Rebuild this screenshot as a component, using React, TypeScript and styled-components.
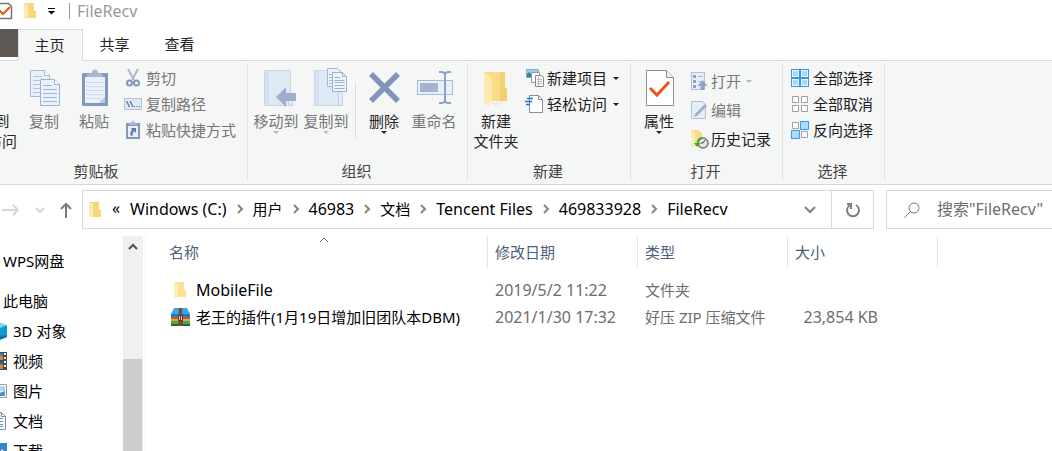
import React from "react";
import styled, { createGlobalStyle, css } from "styled-components";

const GlobalStyle = createGlobalStyle`
  * { box-sizing: border-box; }
  body {
    margin: 0;
    background: #fff;
    color: #000;
    font: 15px/20px "Noto Sans", "Noto Sans CJK SC", sans-serif;
  }
  button, input {
    margin: 0;
    padding: 0;
    border: 0;
    background: none;
    color: inherit;
    font: inherit;
  }
  svg { display: block; flex: none; overflow: visible; }
`;

const Window = styled.div`
  display: flex;
  flex-direction: column;
  height: 100vh;
  overflow: hidden;
`;

const TitleBar = styled.header`
  display: flex;
  align-items: flex-start;
  height: 29px;
  flex: none;
`;

const QuickAccess = styled.div`
  display: flex;
  align-items: center;
  height: 22px;
  gap: 10px;
  margin-left: -4px;
  padding-right: 13px;
`;

const QuickButton = styled.button`
  display: flex;
`;

const Title = styled.h1`
  margin: 3px 0 0;
  height: 16px;
  padding-left: 7px;
  border-left: 1px solid #999;
  color: #999;
  font-size: 16px;
  font-weight: 400;
  line-height: 16px;
`;

const TabStrip = styled.nav`
  display: flex;
  height: 31px;
  flex: none;
`;

const FileTab = styled.button`
  width: 18px;
  height: 28px;
  background: #5d5853;
`;

const Tab = styled.button<{ $active?: boolean }>`
  width: 65px;
  height: 32px;
  padding: 0 2px 2px 0;
  color: #262626;
  ${(p) =>
    p.$active &&
    css`
      position: relative;
      background: #f5f6f6;
      border: 1px solid #dadbdb;
      border-bottom: 0;
    `}
`;

const Ribbon = styled.section`
  display: flex;
  flex: none;
  height: 125px;
  padding: 2px 0 3px;
  border-top: 1px solid #dadbdb;
  border-bottom: 1px solid #d6d8d8;
  background: #f5f6f6;
  overflow: hidden;
`;

const Group = styled.div<{ $width: number; $lead?: number }>`
  display: flex;
  flex-direction: column;
  justify-content: space-between;
  flex: none;
  width: ${(p) => p.$width}px;
  margin-left: ${(p) => p.$lead ?? 0}px;
  padding: 5px 3px 0;
  border-right: 1px solid #e2e3e3;
`;

const GroupBody = styled.div`
  display: flex;
`;

const GroupLabel = styled.div`
  padding-right: 2px;
  color: #444;
  text-align: center;
`;

const LargeButton = styled.button<{ $pinned?: boolean }>`
  display: flex;
  flex-direction: column;
  align-items: center;
  flex: none;
  width: ${(p) => (p.$pinned ? 64 : 50)}px;
  margin-left: ${(p) => (p.$pinned ? 5 : 0)}px;
  color: #262626;
  white-space: nowrap;
  &:disabled { color: #777; }
`;

const LargeLabel = styled.span`
  margin-top: 3px;
`;

const Caret = styled.span`
  width: 0;
  height: 0;
  border: 3px solid transparent;
  border-top-color: currentColor;
  border-bottom: 0;
  button:disabled & { color: #b8b8b8; }
`;

const SmallList = styled.div<{ $row: number; $inset: number; $top?: number }>`
  display: grid;
  grid-auto-rows: ${(p) => p.$row}px;
  align-content: start;
  margin-left: ${(p) => p.$inset}px;
  padding-top: ${(p) => p.$top ?? 0}px;
  height: 78px;
`;

const SmallButton = styled.button<{ $gap?: number }>`
  display: flex;
  align-items: center;
  height: 20px;
  gap: ${(p) => p.$gap ?? 4}px;
  color: #1c1c1c;
  white-space: nowrap;
  &:disabled { color: #777; }
  ${Caret} { margin-left: 3px; }
`;

const Divider = styled.div`
  width: 1px;
  height: 56px;
  margin: 14px 3px 0 4px;
  background: #dcdddd;
`;

const NavRow = styled.div`
  display: flex;
  flex: none;
  padding-top: 5px;
  height: 51px;
`;

const NavButtons = styled.div`
  display: flex;
  align-items: center;
  width: 82px;
  height: 39px;
`;

const NavButton = styled.button<{ $width: number }>`
  display: flex;
  justify-content: center;
  width: ${(p) => p.$width}px;
`;

const AddressBar = styled.div`
  display: flex;
  flex: 1;
  height: 39px;
  border: 1px solid #d9d9d9;
`;

const Crumbs = styled.nav`
  display: flex;
  align-items: center;
  flex: 1;
  padding-left: 5px;
`;

const Crumb = styled.a`
  padding-bottom: 2px;
  color: #000;
  text-decoration: none;
  white-space: nowrap;
`;

const Latin = styled.span`
  font-size: 16px;
`;

const Overflow = styled.button`
  width: 28px;
  height: 24px;
  padding-bottom: 4px;
  font-size: 16px;
  line-height: 20px;
`;

const CrumbArrow = styled.span`
  display: flex;
  justify-content: center;
  width: 26px;
`;

const AddressButton = styled.button<{ $divided?: boolean }>`
  display: flex;
  align-items: center;
  justify-content: center;
  width: 42px;
  border-left: ${(p) => (p.$divided ? "1px solid #d9d9d9" : "0")};
`;

const SearchBox = styled.label`
  display: flex;
  align-items: center;
  width: 166px;
  height: 39px;
  margin-left: 12px;
  padding-left: 17px;
  gap: 17px;
  border: 1px solid #d9d9d9;
  border-right: 0;
`;

const SearchInput = styled.input`
  flex: 1;
  min-width: 0;
  height: 24px;
  padding-bottom: 2px;
  font-size: 16px;
  outline: 0;
  &::placeholder { color: #6d6d6d; opacity: 1; }
`;

const Main = styled.main`
  display: flex;
  flex: 1;
  min-height: 0;
`;

const Sidebar = styled.aside`
  display: flex;
  width: 146px;
  flex: none;
  border-right: 1px solid #f3f3f3;
`;

const Tree = styled.ul`
  flex: 1;
  margin: 0;
  padding: 10px 0 0;
  list-style: none;
  overflow: hidden;
`;

const TreeItem = styled.li<{ $spaced?: boolean }>`
  display: flex;
  height: 30px;
  margin-bottom: ${(p) => (p.$spaced ? 10 : 0)}px;
`;

const TreeLink = styled.a<{ $root?: boolean }>`
  display: flex;
  align-items: center;
  gap: 6px;
  margin-left: ${(p) => (p.$root ? 3 : -9)}px;
  color: #000;
  text-decoration: none;
  white-space: nowrap;
`;

const ScrollTrack = styled.div`
  display: flex;
  flex-direction: column;
  width: 20px;
  margin-right: 2px;
  background: #f0f0f0;
`;

const ScrollArrow = styled.button`
  display: flex;
  align-items: center;
  justify-content: center;
  height: 21px;
  flex: none;
`;

const ScrollThumb = styled.div`
  flex: 1;
  width: 19px;
  margin-top: 102px;
  background: #cdcdcd;
`;

const FileTable = styled.table`
  width: 792px;
  table-layout: fixed;
  border-collapse: collapse;
  align-self: flex-start;
`;

const HeadCell = styled.th`
  position: relative;
  height: 41px;
  padding: 0;
  vertical-align: top;
  color: #4c607a;
  font-weight: 400;
  text-align: left;
`;

const HeadLabel = styled.div<{ $first?: boolean }>`
  height: 32px;
  padding: 6px 0 0 ${(p) => (p.$first ? 23 : 7)}px;
  border-right: 1px solid #e5e5e5;
`;

const SortMark = styled.span`
  position: absolute;
  top: 1px;
  left: 173px;
`;

const Cell = styled.td<{ $right?: boolean }>`
  height: 27px;
  padding: ${(p) => (p.$right ? "0 60px 2px 0" : "0 0 2px 7px")};
  color: #6d6d6d;
  text-align: ${(p) => (p.$right ? "right" : "left")};
  white-space: nowrap;
`;

const NameCell = styled(Cell)`
  padding-left: 24px;
  color: #000;
`;

const FileName = styled.div`
  display: flex;
  align-items: center;
  gap: 6px;
`;

/* ---------- icons ---------- */

const Large = ({ children }: { children: React.ReactNode }) => (
  <svg width="40" height="40" viewBox="0 0 40 40" aria-hidden="true">{children}</svg>
);
const Small = ({ children }: { children: React.ReactNode }) => (
  <svg width="18" height="20" viewBox="0 0 18 20" aria-hidden="true">{children}</svg>
);

const CopyIcon = () => (
  <Large>
    <path d="M6.5 2.5h14l5 5v21h-19z" fill="#e9f0fa" stroke="#a9b9d5" />
    <path d="M20.5 2.5v5h5" fill="#fff" stroke="#a9b9d5" />
    <path d="M9 8.5h9M9 12.5h14M9 16.5h14M9 20.5h14M9 24.5h14" stroke="#b6c5de" />
    <path d="M16.5 11.5h14l5 5v21h-19z" fill="#e9f1fb" stroke="#9fb1cf" />
    <path d="M30.5 11.5v5h5" fill="#fff" stroke="#9fb1cf" />
    <path d="M19 17.5h9M19 21.5h14M19 25.5h14M19 29.5h14M19 33.5h14" stroke="#a5b6d3" />
  </Large>
);

const PasteIcon = () => (
  <Large>
    <rect x="8" y="5" width="26" height="33" rx="1" fill="#8498bd" />
    <path d="M11 9h20v26H11z" fill="#eaf1fb" />
    <path d="M25 35l6-6v6z" fill="#b9c8e0" />
    <path d="M12 14.5h18M12 18.5h18M12 22.5h18M12 26.5h18M12 30.5h15" stroke="#cfdbec" />
    <path d="M13 9V6l5-1a3 3 0 0 1 6 0l5 1v3z" fill="#a9b9d3" />
    <circle cx="21" cy="4" r="2.5" fill="#a9b9d3" />
  </Large>
);

const DestFolder = () => (
  <>
    <path d="M8.500 2.500h26v35h-26z" fill="#dfe8f5" stroke="#c9d6e8" />
    <path d="M9 3l4 2v31l-4 1z" fill="#d6e1f0" />
    <path d="M32.500 37.500v-12l2-2 2 2v12z" fill="#e4ecf7" stroke="#c3d0e4" />
  </>
);

const MoveToIcon = () => (
  <Large>
    <DestFolder />
    <path d="M20 29l10-10v6h10v8H30v6z" fill="#9dafcc" />
  </Large>
);

const CopyToIcon = () => (
  <Large>
    <DestFolder />
    <path d="M21.500 .5h10l3 3v15h-13z" fill="#e9f1fb" stroke="#a9b9d5" />
    <path d="M23 6.500h4M23 9.500h4M23 12.500h4M23 15.500h4" stroke="#a9b9d5" />
    <path d="M26.500 4.500h10l4 4v15h-14z" fill="#eef4fc" stroke="#9fb1cf" />
    <path d="M36.500 4.500v4h4" fill="none" stroke="#9fb1cf" />
    <path d="M28.500 9.500h6M28.500 12.500h10M28.500 14.500h10M28.500 17.500h10M28.500 20.500h10" stroke="#9fb1cf" />
  </Large>
);

const DeleteIcon = () => (
  <Large>
    <path d="M7 6l27 27M34 6L7 33" stroke="#8195b8" strokeWidth="5.500" />
  </Large>
);

const RenameIcon = () => (
  <Large>
    <rect x="3.500" y="12.500" width="35" height="14" fill="#e8f0fb" stroke="#a8b9d4" />
    <path d="M6 15h18v9H6z" fill="#a3b4d1" />
    <path d="M31 5v29" stroke="#8da2c6" strokeWidth="2" />
    <path d="M25 4h2q4 0 4 3 0-3 4-3h2M25 35h2q4 0 4-3 0 3 4 3h2" fill="none" stroke="#8da2c6" strokeWidth="2" />
  </Large>
);

const NewFolderIcon = () => (
  <Large>
    <path d="M14 34h17l-12 4z" fill="#ececec" />
    <path d="M8 4h20v16h3v13H14z" fill="#fbdc85" />
    <path d="M24 4h5v16h2v13h-7z" fill="#f5d071" />
    <path d="M8 4l8 6v23l-4 5-4-3z" fill="#ffe9ad" />
  </Large>
);

const PropertiesIcon = () => (
  <Large>
    <path d="M7.500 2.500h20l7 7v28h-27z" fill="#fff" stroke="#8c8c8c" />
    <path d="M27.500 2.500v7h7" fill="#f0f0f0" stroke="#8c8c8c" />
    <path d="M11 20l7 7 12-13" fill="none" stroke="#e8561c" strokeWidth="3" />
  </Large>
);

const CutIcon = () => (
  <Small>
    <path d="M4 1l6 11M14 1L8 12" stroke="#a9b9d0" strokeWidth="2" />
    <circle cx="5.500" cy="15" r="2.500" fill="none" stroke="#8398bd" strokeWidth="2" />
    <circle cx="12.500" cy="15" r="2.500" fill="none" stroke="#8398bd" strokeWidth="2" />
  </Small>
);

const CopyPathIcon = () => (
  <Small>
    <rect x=".5" y="4.500" width="17" height="11" fill="#dfe9f7" stroke="#b3c2da" />
    <path d="M2.500 7l3 6M6 7l3 6" stroke="#5d7195" strokeWidth="1.300" />
    <path d="M10 12.500h1M12.500 12.500h1M15 12.500h1" stroke="#5d7195" />
  </Small>
);

const PasteShortcutIcon = () => (
  <Small>
    <rect x="2" y="3" width="14" height="16" fill="#8498bd" />
    <path d="M4 6h10v11H4z" fill="#e8f0fb" />
    <path d="M5 5V3l3-1 1-2 1 2 3 1v2z" fill="#a9b9d3" />
    <path d="M7 8h5v5l-2-2q-2 2-1 4l-2 1q-2-3 1-6z" fill="#5f7aa8" />
  </Small>
);

const NewItemIcon = () => (
  <Small>
    <path d="M.5 1.500h12v8H.5z" fill="#9bd0f2" stroke="#8fa9b8" />
    <path d="M1 9V6l2-2 2 2v3z" fill="#3b7f9c" />
    <path d="M5.500 4.500h8v10h-8z" fill="#fff" stroke="#8d9aa3" />
    <path d="M9.500 7.500h6l2 2v9h-8z" fill="#fff" stroke="#8a8a8a" />
    <path d="M11 11.500h5M11 13.500h5M11 15.500h5" stroke="#a5bde0" />
    <path d="M12.500 9v9" stroke="#e9a8a8" />
  </Small>
);

const EasyAccessIcon = () => (
  <Small>
    <path d="M3.500 1.500h9l4 4v13h-13z" fill="#fff" stroke="#8c8c8c" />
    <path d="M12.500 1.500v4h4" fill="none" stroke="#8c8c8c" />
    <path d="M1 4.500h6M-1 7.500h7M0 10.500h4" stroke="#1b77cf" strokeWidth="1.500" />
  </Small>
);

const OpenIcon = () => (
  <Small>
    <rect x=".5" y="1.500" width="13" height="17" fill="#e5edf8" stroke="#b0bfd8" />
    <path d="M2 4h3v3H2zM2 9h3v3H2zM2 14h3v3H2z" fill="#8da2c6" />
    <path d="M7 5.500h5M7 10.500h3" stroke="#a9b9d3" />
    <path d="M11.500 9l5 6h-3v4h-4v-4h-3z" fill="#8fa3c5" />
  </Small>
);

const EditIcon = () => (
  <Small>
    <path d="M.5 1.500h11l3 3v14H.5z" fill="#e5edf8" stroke="#b0bfd8" />
    <path d="M3 17l1-3L14 4l2 2L6 16z" fill="#9dafcc" />
  </Small>
);

const HistoryIcon = () => (
  <Small>
    <path d="M0 1h7l4 3v12L2 18l-2-1z" fill="#fbdc85" />
    <path d="M0 1l4 3v13l-2 2-2-2z" fill="#ffedb8" />
    <circle cx="12" cy="14" r="5" fill="#e6e6e6" stroke="#777" strokeWidth="1.500" />
    <path d="M12 14l2-3M12 14h-2" stroke="#444" />
    <path d="M11 8q-5 0-5 6H3l3 4 4-4H8q0-3 3-4z" fill="#45a83a" />
  </Small>
);

const SelectAllIcon = () => (
  <Small>
    <path d="M0 1h18v18H0z" fill="#3c97e6" />
    <path d="M1 2h7v7H1zM10 2h7v7h-7zM1 11h7v7H1zM10 11h7v7h-7z" fill="#e6f5ff" />
    <path d="M2 3h5v5H2zM11 3h5v5h-5zM2 12h5v5H2zM11 12h5v5h-5z" fill="#a9dcfb" />
  </Small>
);

const SelectNoneIcon = () => (
  <Small>
    <path d="M1.500 2.500h6v6h-6zM10.500 2.500h6v6h-6zM1.500 11.500h6v6h-6zM10.500 11.500h6v6h-6z" fill="#fdfdfd" stroke="#a3a3a3" />
  </Small>
);

const InvertIcon = () => (
  <Small>
    <path d="M1.500 2.500h6v6h-6zM10.500 11.500h6v6h-6z" fill="#fdfdfd" stroke="#a3a3a3" />
    <path d="M9.500 1.500h8v8h-8zM.5 10.500h8v8h-8z" fill="#a9dcfb" stroke="#3c97e6" />
  </Small>
);

const FolderIcon = () => (
  <svg width="14" height="18" viewBox="0 0 14 18" aria-hidden="true">
    <path d="M1 1h10v8h2v7H4z" fill="#f8d67a" />
    <path d="M1 1l4 2v12l-2 2-2-1z" fill="#ffe9ad" />
  </svg>
);

const ZipIcon = () => (
  <svg width="20" height="18" viewBox="-1 0 20 18" aria-hidden="true">
    <path d="M3 0h13l3 6H0z" fill="#35a8ee" />
    <path d="M0 6h19v3H0z" fill="#1a7fc4" />
    <path d="M0 9h19v3H0z" fill="#d8502f" />
    <path d="M0 11h19v2H0z" fill="#f0a33a" />
    <path d="M0 13h19v5H0z" fill="#4ca65a" />
    <path d="M0 16h19v2H0z" fill="#226b35" />
    <path d="M8 0h3l1 18H7z" fill="#7a4a2d" />
    <path d="M7.500 7.500h4v5h-4z" fill="#d9cdbb" stroke="#5a3a24" />
    <path d="M9 8h1v4H9z" fill="#5a3a24" />
  </svg>
);

const Chevron = ({ d, w = 10, h = 10, color = "#6f6f6f", sw = 2 }: { d: string; w?: number; h?: number; color?: string; sw?: number }) => (
  <svg width={w} height={h} viewBox={`0 0 ${w} ${h}`} aria-hidden="true">
    <path d={d} fill="none" stroke={color} strokeWidth={sw} />
  </svg>
);

const TreeSvg = ({ children }: { children: React.ReactNode }) => (
  <svg width="16" height="18" viewBox="0 0 16 18" aria-hidden="true">{children}</svg>
);

const CubeIcon = () => (
  <TreeSvg>
    <path d="M0 3l8-3 8 3-8 3z" fill="#7fd8f2" />
    <path d="M0 3l8 3v12l-8-3z" fill="#35b5dd" />
    <path d="M16 3L8 6v12l8-3z" fill="#0d9ccf" />
    <path d="M8 14l8-1v2l-8 3z" fill="#0877a8" />
  </TreeSvg>
);
const VideoIcon = () => (
  <TreeSvg>
    <path d="M0 0h16v18H0z" fill="#4a4a4a" />
    <path d="M3 1h9v7H3z" fill="#3c7fd0" />
    <path d="M3 10h9v7H3z" fill="#2c68b5" />
    <path d="M8 2l4 3v3H8zM8 12l4 1v4H8z" fill="#d28a2f" />
    <path d="M13 1h2v2h-2zM13 5h2v2h-2zM13 9h2v2h-2zM13 13h2v2h-2z" fill="#f3f3f3" />
  </TreeSvg>
);
const PictureIcon = () => (
  <TreeSvg>
    <path d="M.5 2.500h15v13H.5z" fill="#fff" stroke="#9a9a9a" />
    <path d="M2 4h12v5H2z" fill="#a8d6fa" />
    <path d="M2 9l6 2 6-2v5H2z" fill="#4f8fc9" />
  </TreeSvg>
);
const DocumentIcon = () => (
  <TreeSvg>
    <path d="M1.500 .5h9l4 4v13h-13z" fill="#fff" stroke="#8c8c8c" />
    <path d="M10.500 .5v4h4" fill="none" stroke="#8c8c8c" />
    <path d="M4 6.500h8M4 9.500h8M4 12.500h8M4 14.500h8" stroke="#4c9bd3" />
  </TreeSvg>
);
const DownloadIcon = () => (
  <TreeSvg>
    <path d="M0 1h16v16H0z" fill="#2f86d9" />
    <path d="M8 4v8M4 8l4 4 4-4" fill="none" stroke="#fff" strokeWidth="2" />
  </TreeSvg>
);

/* ---------- data ---------- */

const crumbs = [
  { text: "Windows (C:)", latin: true },
  { text: "用户" },
  { text: "46983", latin: true },
  { text: "文档" },
  { text: "Tencent Files", latin: true },
  { text: "469833928", latin: true },
  { text: "FileRecv", latin: true },
];

const places = [
  { text: "3D 对象", icon: <CubeIcon /> },
  { text: "视频", icon: <VideoIcon /> },
  { text: "图片", icon: <PictureIcon /> },
  { text: "文档", icon: <DocumentIcon /> },
  { text: "下载", icon: <DownloadIcon /> },
];

export default function App() {
  return (
    <Window>
      <GlobalStyle />
      <TitleBar>
        <QuickAccess>
          <QuickButton aria-label="属性">
            <svg width="17" height="18" viewBox="0 0 17 18" aria-hidden="true">
              <path d="M.5 1.500h12l3 3v12H.5z" fill="#fff" stroke="#777" strokeWidth="1.500" />
              <path d="M3 8l4 4 7-7" fill="none" stroke="#e8561c" strokeWidth="2" />
            </svg>
          </QuickButton>
          <QuickButton aria-label="新建文件夹"><FolderIcon /></QuickButton>
          <QuickButton aria-label="自定义快速访问工具栏">
            <svg width="9" height="8" viewBox="0 0 9 8" aria-hidden="true">
              <path d="M1 1.500h7" stroke="#000" />
              <path d="M1 4h7L4.500 7.500z" />
            </svg>
          </QuickButton>
        </QuickAccess>
        <Title>FileRecv</Title>
      </TitleBar>

      <TabStrip>
        <FileTab aria-label="文件" />
        <Tab $active>主页</Tab>
        <Tab>共享</Tab>
        <Tab>查看</Tab>
      </TabStrip>

      <Ribbon>
        <Group $width={301} $lead={-53}>
          <GroupBody>
            <LargeButton $pinned>
              <Large>{null}</Large>
              <LargeLabel>固定到<br />快速访问</LargeLabel>
            </LargeButton>
            <LargeButton disabled><CopyIcon /><LargeLabel>复制</LargeLabel></LargeButton>
            <LargeButton disabled><PasteIcon /><LargeLabel>粘贴</LargeLabel></LargeButton>
            <SmallList $row={26} $inset={5}>
              <SmallButton disabled><CutIcon />剪切</SmallButton>
              <SmallButton disabled><CopyPathIcon />复制路径</SmallButton>
              <SmallButton disabled><PasteShortcutIcon />粘贴快捷方式</SmallButton>
            </SmallList>
          </GroupBody>
          <GroupLabel>剪贴板</GroupLabel>
        </Group>

        <Group $width={220}>
          <GroupBody>
            <LargeButton disabled><MoveToIcon /><LargeLabel>移动到</LargeLabel><Caret /></LargeButton>
            <LargeButton disabled><CopyToIcon /><LargeLabel>复制到</LargeLabel><Caret /></LargeButton>
            <Divider />
            <LargeButton><DeleteIcon /><LargeLabel>删除</LargeLabel><Caret /></LargeButton>
            <LargeButton disabled><RenameIcon /><LargeLabel>重命名</LargeLabel></LargeButton>
          </GroupBody>
          <GroupLabel>组织</GroupLabel>
        </Group>

        <Group $width={163}>
          <GroupBody>
            <LargeButton><NewFolderIcon /><LargeLabel>新建<br />文件夹</LargeLabel></LargeButton>
            <SmallList $row={26} $inset={5}>
              <SmallButton $gap={3}><NewItemIcon />新建项目<Caret /></SmallButton>
              <SmallButton $gap={3}><EasyAccessIcon />轻松访问<Caret /></SmallButton>
            </SmallList>
          </GroupBody>
          <GroupLabel>新建</GroupLabel>
        </Group>

        <Group $width={152}>
          <GroupBody>
            <LargeButton><PropertiesIcon /><LargeLabel>属性</LargeLabel><Caret /></LargeButton>
            <SmallList $row={29} $inset={7} $top={3}>
              <SmallButton $gap={2} disabled><OpenIcon />打开<Caret /></SmallButton>
              <SmallButton $gap={2} disabled><EditIcon />编辑</SmallButton>
              <SmallButton $gap={2}><HistoryIcon />历史记录</SmallButton>
            </SmallList>
          </GroupBody>
          <GroupLabel>打开</GroupLabel>
        </Group>

        <Group $width={102}>
          <GroupBody>
            <SmallList $row={26} $inset={5}>
              <SmallButton><SelectAllIcon />全部选择</SmallButton>
              <SmallButton><SelectNoneIcon />全部取消</SmallButton>
              <SmallButton><InvertIcon />反向选择</SmallButton>
            </SmallList>
          </GroupBody>
          <GroupLabel>选择</GroupLabel>
        </Group>
      </Ribbon>

      <NavRow>
        <NavButtons>
          <NavButton $width={24} aria-label="前进" disabled>
            <Chevron w={18} h={12} d="M-1 6h16M10 1l5 5-5 5" color="#d6d6d6" />
          </NavButton>
          <NavButton $width={32} aria-label="最近位置">
            <Chevron w={10} h={8} d="M1 2l4 4 4-4" color="#d6d6d6" />
          </NavButton>
          <NavButton $width={20} aria-label="上移">
            <Chevron w={12} h={16} d="M6 16V2M1 7l5-5 5 5" color="#7a7a7a" />
          </NavButton>
        </NavButtons>
        <AddressBar>
          <Crumbs aria-label="地址">
            <FolderIcon />
            <Overflow aria-label="更多">«</Overflow>
            {crumbs.map((c, i) => (
              <React.Fragment key={c.text}>
                {i > 0 && <CrumbArrow><Chevron w={6} h={12} d="M1 1l4 4-4 4" color="#858585" /></CrumbArrow>}
                <Crumb href="#">{c.latin ? <Latin>{c.text}</Latin> : c.text}</Crumb>
              </React.Fragment>
            ))}
          </Crumbs>
          <AddressButton aria-label="以前的位置">
            <Chevron w={12} h={8} d="M1 1l5 5 5-5" color="#808080" />
          </AddressButton>
          <AddressButton $divided aria-label="刷新">
            <svg width="16" height="16" viewBox="0 0 16 16" aria-hidden="true">
              <path d="M11 3a6 6 0 1 1-6 0" fill="none" stroke="#808080" strokeWidth="2" />
              <path d="M2 2h4v5" fill="none" stroke="#808080" strokeWidth="2" />
            </svg>
          </AddressButton>
        </AddressBar>
        <SearchBox>
          <svg width="16" height="16" viewBox="0 0 16 16" aria-hidden="true">
            <circle cx="10" cy="6" r="5" fill="none" stroke="#777" />
            <path d="M6.500 9.500L.5 15.500" stroke="#777" />
          </svg>
          <SearchInput aria-label="搜索" placeholder={'搜索"FileRecv"'} />
        </SearchBox>
      </NavRow>

      <Main>
        <Sidebar>
          <Tree>
            <TreeItem $spaced><TreeLink $root href="#">WPS网盘</TreeLink></TreeItem>
            <TreeItem><TreeLink $root href="#">此电脑</TreeLink></TreeItem>
            {places.map((p) => (
              <TreeItem key={p.text}><TreeLink href="#">{p.icon}{p.text}</TreeLink></TreeItem>
            ))}
          </Tree>
          <ScrollTrack>
            <ScrollArrow aria-label="向上滚动">
              <Chevron w={10} h={8} d="M1 6l4-4 4 4" color="#505050" />
            </ScrollArrow>
            <ScrollThumb />
          </ScrollTrack>
        </Sidebar>
        <FileTable>
          <colgroup>
            <col />
            <col width="150" />
            <col width="150" />
            <col width="150" />
          </colgroup>
          <thead>
            <tr>
              <HeadCell>
                <HeadLabel $first>名称</HeadLabel>
                <SortMark><Chevron w={10} h={6} d="M1 5l4-4 4 4" sw={1} /></SortMark>
              </HeadCell>
              <HeadCell><HeadLabel>修改日期</HeadLabel></HeadCell>
              <HeadCell><HeadLabel>类型</HeadLabel></HeadCell>
              <HeadCell><HeadLabel>大小</HeadLabel></HeadCell>
            </tr>
          </thead>
          <tbody>
            <tr>
              <NameCell>
                <FileName>
                  <svg width="20" height="18" viewBox="-3 0 20 18" aria-hidden="true">
                    <path d="M1 1h10v8h2v7H4z" fill="#fbdf92" />
                    <path d="M1 1l4 2v12l-2 2-2-1z" fill="#ffefc0" />
                  </svg>
                  <Latin>MobileFile</Latin>
                </FileName>
              </NameCell>
              <Cell><Latin>2019/5/2 11:22</Latin></Cell>
              <Cell>文件夹</Cell>
              <Cell $right />
            </tr>
            <tr>
              <NameCell>
                <FileName><ZipIcon />老王的插件(1月19日增加旧团队本DBM)</FileName>
              </NameCell>
              <Cell><Latin>2021/1/30 17:32</Latin></Cell>
              <Cell>好压 ZIP 压缩文件</Cell>
              <Cell $right><Latin>23,854 KB</Latin></Cell>
            </tr>
          </tbody>
        </FileTable>
      </Main>
    </Window>
  );
}
